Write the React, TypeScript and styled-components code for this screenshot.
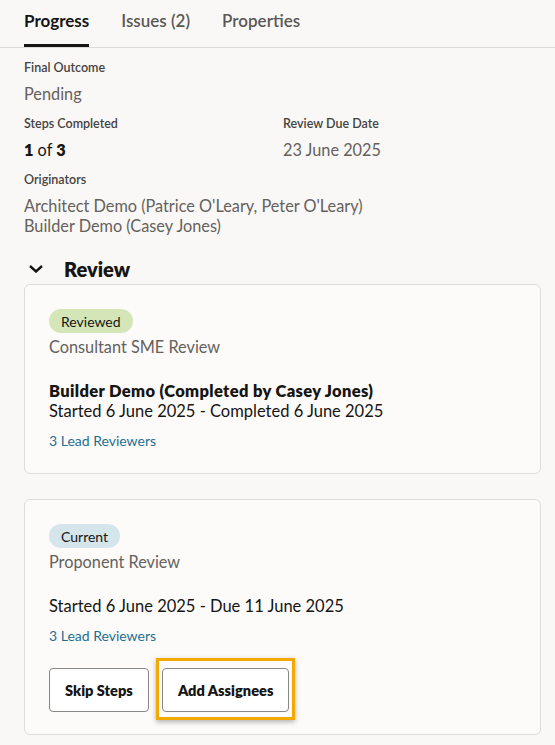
import React from "react";
import styled, { createGlobalStyle } from "styled-components";

const Global = createGlobalStyle`
  html, body { margin: 0; padding: 0; background: #f9f8f7; }
  body { font-family: Lato, "Liberation Sans", sans-serif; color: #161513; }
  * { box-sizing: border-box; }
`;

const Page = styled.div`
  width: 555px;
  min-height: 745px;
  background: #f9f8f7;
`;

const TabBar = styled.div`
  display: flex;
  gap: 32px;
  padding: 0 24px;
  height: 48px;
  border-bottom: 1px solid #dedcd9;
`;

const Tab = styled.div<{ $active?: boolean }>`
  display: flex;
  align-items: flex-start;
  padding-top: 10px;
  font-size: 17px;
  line-height: 22px;
  font-weight: ${(p) => (p.$active ? 700 : 600)};
  color: ${(p) => (p.$active ? "#161513" : "#5b5854")};
  border-bottom: 3px solid ${(p) => (p.$active ? "#161513" : "transparent")};
  height: 47px;
`;

const Content = styled.div`
  padding: 12px 14px 0 24px;
`;

const Fields = styled.div`
  display: flex;
  flex-direction: column;
  gap: 12px;
`;

const FieldRow = styled.div`
  display: grid;
  grid-template-columns: 259px 1fr;
`;

const Field = styled.div`
  display: flex;
  flex-direction: column;
`;

const Label = styled.div`
  font-size: 12.5px;
  line-height: 16px;
  font-weight: 600;
  color: #45423f;
  margin-bottom: 8px;
`;

const Value = styled.div<{ $muted?: boolean }>`
  font-size: 16.3px;
  line-height: 20px;
  color: ${(p) => (p.$muted ? "#65615d" : "#161513")};
  b { font-weight: 800; }
`;

const SectionHeader = styled.div`
  display: flex;
  align-items: center;
  gap: 21px;
  height: 26px;
  margin-top: 20px;
  margin-bottom: 2px;
  padding-left: 5px;
`;

const Title = styled.h2`
  margin: 0;
  font-size: 20px;
  font-weight: 800;
  color: #161513;
`;

const Cards = styled.div`
  display: flex;
  flex-direction: column;
  gap: 25px;
`;

const Card = styled.div`
  background: #fcfbfa;
  border: 1px solid #dedcd9;
  border-radius: 6px;
  padding: 24px 24px 22px 24px;
  display: flex;
  flex-direction: column;
  align-items: flex-start;
`;

const Badge = styled.span<{ $tone: "green" | "blue" }>`
  display: inline-flex;
  align-items: center;
  height: 24px;
  padding: 0 12px;
  border-radius: 12px;
  font-size: 14px;
  color: #161513;
  background: ${(p) => (p.$tone === "green" ? "#d4e6b8" : "#d5e5ec")};
`;

const StepName = styled.div`
  margin-top: 4px;
  font-size: 16.3px;
  line-height: 20px;
  color: #65615d;
`;

const Detail = styled.div<{ $bold?: boolean }>`
  font-size: 16.5px;
  line-height: 20px;
  font-weight: ${(p) => (p.$bold ? 800 : 400)};
  letter-spacing: ${(p) => (p.$bold ? "0.35px" : "0")};
  color: #161513;
`;

const DetailGroup = styled.div`
  margin-top: 24px;
  display: flex;
  flex-direction: column;
`;

const Link = styled.a`
  margin-top: 10px;
  font-size: 14px;
  line-height: 20px;
  color: #1f6f8f;
  text-decoration: none;
`;

const Actions = styled.div`
  margin-top: 22px;
  display: flex;
  gap: 13px;
`;

const Button = styled.button<{ $focused?: boolean }>`
  position: relative;
  height: 44px;
  padding: 0 15px;
  background: #fff;
  border: 1px solid #8a8683;
  border-radius: 4px;
  font-family: Lato, "Liberation Sans", sans-serif;
  font-size: 14.6px;
  font-weight: 800;
  color: #161513;
  ${(p) =>
    p.$focused
      ? `
  &::after {
    content: "";
    position: absolute;
    inset: -11px -7px -9px -7px;
    border: 3px solid #f4a900;
    box-shadow: 0 2px 5px rgba(0,0,0,0.3);
    pointer-events: none;
  }`
      : ""}
`;

const Chevron = () => (
  <svg width="14" height="8" viewBox="0 0 14 8" fill="none">
    <path d="M1 1l6 5.5L13 1" stroke="#161513" strokeWidth="2.4" />
  </svg>
);

export default function App() {
  return (
    <Page>
      <Global />
      <TabBar>
        <Tab $active>Progress</Tab>
        <Tab>Issues (2)</Tab>
        <Tab>Properties</Tab>
      </TabBar>
      <Content>
        <Fields>
          <Field>
            <Label>Final Outcome</Label>
            <Value $muted>Pending</Value>
          </Field>
          <FieldRow>
            <Field>
              <Label>Steps Completed</Label>
              <Value>
                <b>1</b> of <b>3</b>
              </Value>
            </Field>
            <Field>
              <Label>Review Due Date</Label>
              <Value $muted>23 June 2025</Value>
            </Field>
          </FieldRow>
          <Field>
            <Label>Originators</Label>
            <Value $muted>Architect Demo (Patrice O'Leary, Peter O'Leary)</Value>
            <Value $muted>Builder Demo (Casey Jones)</Value>
          </Field>
        </Fields>
        <SectionHeader>
          <Chevron />
          <Title>Review</Title>
        </SectionHeader>
        <Cards>
          <Card>
            <Badge $tone="green">Reviewed</Badge>
            <StepName>Consultant SME Review</StepName>
            <DetailGroup>
              <Detail $bold>Builder Demo (Completed by Casey Jones)</Detail>
              <Detail>Started 6 June 2025 - Completed 6 June 2025</Detail>
            </DetailGroup>
            <Link href="#">3 Lead Reviewers</Link>
          </Card>
          <Card>
            <Badge $tone="blue">Current</Badge>
            <StepName>Proponent Review</StepName>
            <DetailGroup>
              <Detail>Started 6 June 2025 - Due 11 June 2025</Detail>
            </DetailGroup>
            <Link href="#">3 Lead Reviewers</Link>
            <Actions>
              <Button>Skip Steps</Button>
              <Button $focused>Add Assignees</Button>
            </Actions>
          </Card>
        </Cards>
      </Content>
    </Page>
  );
}
